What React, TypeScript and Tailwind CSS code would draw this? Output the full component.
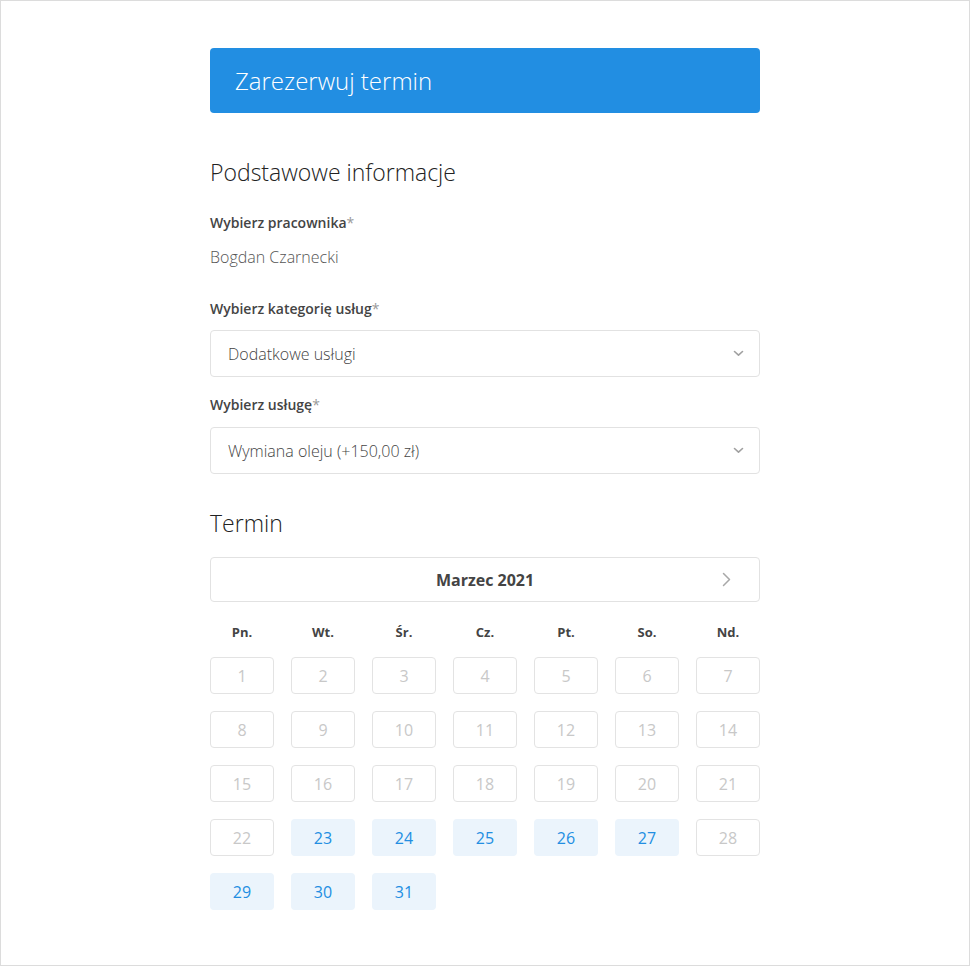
import React from "react";

const WEEKDAYS = ["Pn.", "Wt.", "Śr.", "Cz.", "Pt.", "So.", "Nd."];
// days that can still be booked this month
const AVAILABLE = new Set([23, 24, 25, 26, 27, 29, 30, 31]);

function ChevronDown() {
  return (
    <svg width="11" height="7" viewBox="0 0 11 7" fill="none" aria-hidden="true">
      <polyline points="1.5,1.5 5.5,5.2 9.5,1.5" stroke="#a0a0a0" strokeWidth="1.6" strokeLinecap="round" strokeLinejoin="round" />
    </svg>
  );
}

function ChevronRight() {
  return (
    <svg width="9" height="15" viewBox="0 0 9 15" fill="none" aria-hidden="true">
      <polyline points="1.5,1.5 7.5,7.5 1.5,13.5" stroke="#a8a8a8" strokeWidth="1.5" strokeLinecap="round" strokeLinejoin="round" />
    </svg>
  );
}

function Label({ children }: { children: React.ReactNode }) {
  return (
    <p className="text-[14px] leading-[20px] font-semibold text-[#444]">
      {children}
      <span className="font-normal text-[#999]">*</span>
    </p>
  );
}

function Select({ value }: { value: string }) {
  return (
    <div className="flex h-[47px] items-center justify-between rounded-[4px] border border-[#e2e2e2] pr-[15px] pl-[17px]">
      <span className="text-[16px] font-light text-[#444]">{value}</span>
      <ChevronDown />
    </div>
  );
}

function DayCell({ day }: { day: number }) {
  const open = AVAILABLE.has(day);
  return open ? (
    <div className="flex h-[37px] items-center justify-center rounded-[4px] bg-[#ebf4fc] text-[16px] text-[#228ee2]">
      {day}
    </div>
  ) : (
    <div className="flex h-[37px] items-center justify-center rounded-[4px] border border-[#e3e3e3] text-[16px] text-[#c8c8c8]">
      {day}
    </div>
  );
}

export default function App() {
  const days = Array.from({ length: 31 }, (_, i) => i + 1);

  return (
    <div
      className="h-[966px] w-[970px] border border-[#dcdcdc] bg-white"
      style={{ fontFamily: '"Open Sans", "Noto Sans", sans-serif' }}
    >
      <div className="mx-auto mt-[47px] w-[550px]">
        {/* header bar */}
        <div className="flex h-[65px] items-center rounded-[4px] bg-[#228ee2] px-[25px]">
          <h1 className="text-[24px] font-light text-white">Zarezerwuj termin</h1>
        </div>

        <h2 className="mt-[43px] text-[23px] leading-[32px] font-light text-[#222]">
          Podstawowe informacje
        </h2>

        <div className="mt-[25px]">
          <Label>Wybierz pracownika</Label>
          <p className="mt-[12px] text-[16px] leading-[24px] font-light text-[#555]">
            Bogdan Czarnecki
          </p>
        </div>

        <div className="mt-[30px]">
          <Label>Wybierz kategorię usług</Label>
          <div className="mt-[11px]">
            <Select value="Dodatkowe usługi" />
          </div>
        </div>

        <div className="mt-[18px]">
          <Label>Wybierz usługę</Label>
          <div className="mt-[12px]">
            <Select value="Wymiana oleju (+150,00 zł)" />
          </div>
        </div>

        <h2 className="mt-[33px] text-[23px] leading-[32px] font-light text-[#222]">Termin</h2>

        {/* month switcher */}
        <div className="relative mt-[18px] flex h-[45px] items-center justify-center rounded-[4px] border border-[#e2e2e2]">
          <span className="text-[16px] font-bold text-[#444]">Marzec 2021</span>
          <span className="absolute right-[28px] top-[14px]">
            <ChevronRight />
          </span>
        </div>

        <div className="mt-[21px] grid grid-cols-7 gap-x-[17px]">
          {WEEKDAYS.map((d) => (
            <div key={d} className="text-center text-[13px] leading-[18px] font-bold text-[#444]">
              {d}
            </div>
          ))}
        </div>

        <div className="mt-[16px] grid grid-cols-7 gap-x-[17px] gap-y-[17px]">
          {days.map((d) => (
            <DayCell key={d} day={d} />
          ))}
        </div>
      </div>
    </div>
  );
}
